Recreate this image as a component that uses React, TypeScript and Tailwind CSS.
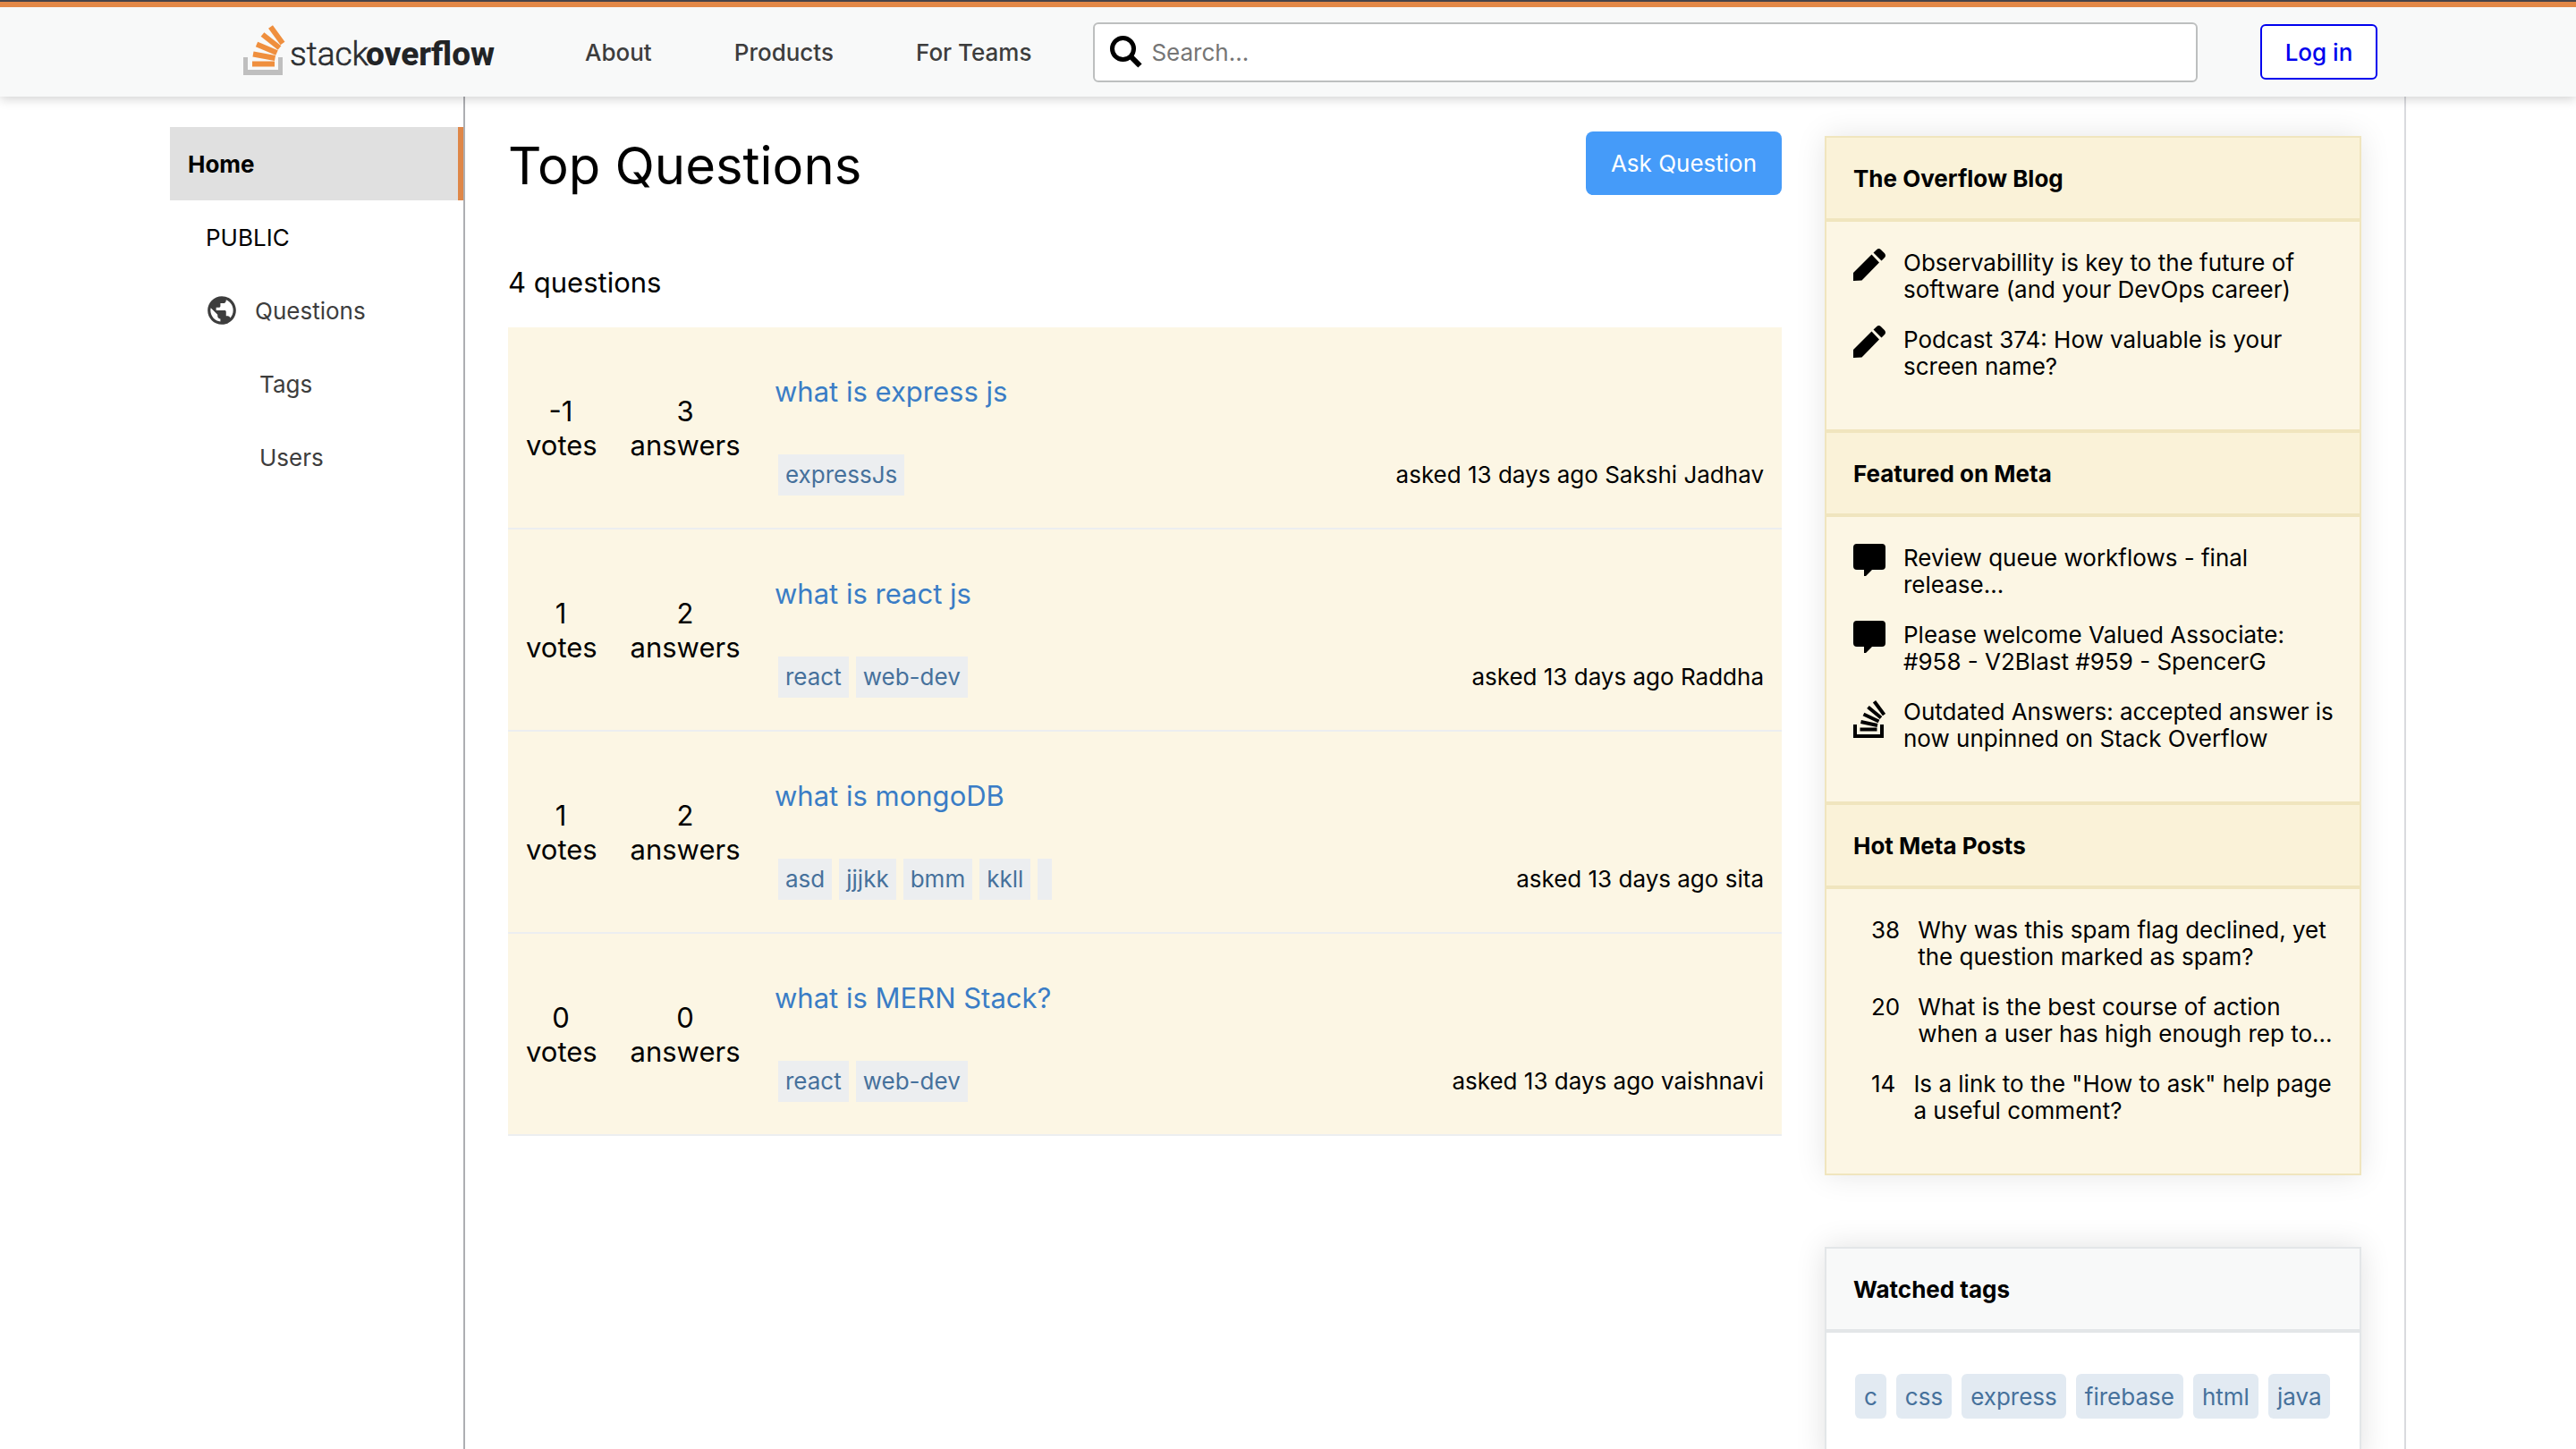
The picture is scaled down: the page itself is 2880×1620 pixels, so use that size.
import { MdPublic } from "react-icons/md";
import type { ReactNode } from "react";

const questions = [
  { votes: "-1", answers: "3", title: "what is express js", tags: ["expressJs"], author: "Sakshi Jadhav" },
  { votes: "1", answers: "2", title: "what is react js", tags: ["react", "web-dev"], author: "Raddha" },
  { votes: "1", answers: "2", title: "what is mongoDB", tags: ["asd", "jjjkk", "bmm", "kkll", ""], author: "sita" },
  { votes: "0", answers: "0", title: "what is MERN Stack?", tags: ["react", "web-dev"], author: "vaishnavi" },
];

const watched = ["c", "css", "express", "firebase", "html", "java"];

function Logo() {
  return (
    <svg viewBox="0 0 280 56" className="h-14 w-[280px] shrink-0 overflow-visible" role="img" aria-label="stack overflow">
      <path d="M0 36h5v14h34V36h5v20H0z" fill="#bfbfbf" />
      <g stroke="#ef8f3e" strokeWidth="6">
        <path d="M10 43.500H35" />
        <path d="M11 32.500L35.500 37" />
        <path d="M15 21.500L37.500 31" />
        <path d="M21.500 10.500L40.500 25.500" />
        <path d="M30.500 2L44 20.500" />
      </g>
      <text x="52" y="45" fontSize="37" fontFamily="Roboto" fontWeight="300" fill="#2b2d30" stroke="#2b2d30" strokeWidth="0.600">
        stack
      </text>
      <text x="137" y="45" fontSize="37" fontFamily="Roboto" fontWeight="800" fill="#222426">
        overflow
      </text>
    </svg>
  );
}

function PencilIcon() {
  return (
    <svg viewBox="0 0 36 36" className="size-9 shrink-0">
      <path d="M0 27L20.500 6.500 29 15.500 9.500 35.500 0 36zM22.500 4.500L26 1.200Q28.500-1 31 1.200L35 5.200Q37 8 35 10L31.500 13.500z" />
    </svg>
  );
}

function SpeechIcon() {
  return (
    <svg viewBox="0 0 36 36" className="size-9 shrink-0">
      <path d="M4 0h28q4 0 4 4v21q0 4-4 4H21l-7 7h-2v-7H4q-4 0-4-4V4q0-4 4-4z" />
    </svg>
  );
}

function StackIcon() {
  return (
    <svg viewBox="0 1 36 45" className="h-[45px] w-9 shrink-0">
      <path d="M0 31h4v11h26V31h4v15H0z" />
      <g stroke="#000" strokeWidth="4">
        <path d="M7.500 36.500H26.500" />
        <path d="M8.500 28L27 32" />
        <path d="M11.500 19.500L28.500 27.500" />
        <path d="M16.500 11.500L31 23.500" />
        <path d="M23.500 5.200L34.500 20" />
      </g>
    </svg>
  );
}

function PanelHeader({ children }: { children: ReactNode }) {
  return (
    <h2 className="flex h-[98px] items-center border-y-4 border-[#f0e5be] bg-[#faf2d8] px-[30px] pt-0.5 text-[26px] leading-[30px] font-bold first:h-[94px] first:border-t-0">
      {children}
    </h2>
  );
}

function PanelItem({ lead, children }: { lead: ReactNode; children: ReactNode }) {
  return (
    <li className="flex h-[60px] items-start gap-5">
      {lead}
      <a href="#" className="pt-px whitespace-nowrap">{children}</a>
    </li>
  );
}

const listClass = "flex flex-col gap-[26px] px-[30px] pt-[30px] pb-14 text-[26px] leading-[30px]";
const metaListClass = "flex flex-col gap-[26px] pl-[50px] pr-[30px] pt-[30px] pb-14 text-[26px] leading-[30px]";

export default function App() {
  return (
    <div className="flex h-screen flex-col overflow-hidden bg-white font-['Inter',sans-serif] text-black">
      <header className="relative z-10 border-t-2 border-[#474449] bg-[#f8f9f9] shadow-[0_2px_12px_rgba(0,0,0,0.2)]">
        <div className="border-t-[6px] border-[#e38847]">
          <div className="mx-auto flex h-[100px] max-w-[2500px] items-center pr-8 pl-[82px]">
            <a href="#" className="mr-[102px] mb-1"><Logo /></a>
            <nav className="mr-[69px] flex gap-[92px] text-[26px] font-medium text-[#3d3d3d]">
              <a href="#">About</a>
              <a href="#">Products</a>
              <a href="#" className="whitespace-nowrap">For Teams</a>
            </nav>
            <label className="mr-[70px] flex h-[67px] flex-1 items-center gap-[10px] rounded-md border-2 border-[#bdbfbf] bg-white px-[17px]">
              <svg viewBox="0 0 36 36" className="size-9 shrink-0" fill="none" stroke="#000">
                <circle cx="14.500" cy="14.500" r="12" strokeWidth="5" />
                <path d="M23 23L33.500 33.500" strokeWidth="6" />
              </svg>
              <input
                type="text"
                aria-label="Search"
                placeholder="Search..."
                className="w-full bg-transparent text-[26px] outline-none placeholder:text-[#757575]"
              />
            </label>
            <button className="h-[62px] w-[131px] rounded-md border-2 border-[#0000ee] bg-white text-[26px] font-medium text-[#0000ee]">
              Log in
            </button>
          </div>
        </div>
      </header>

      <div className="mx-auto flex w-full max-w-[2500px] flex-1 border-r-2 border-[#d9dade]">
        <nav className="w-[330px] shrink-0 border-r-2 border-[#adaeb2] pt-[34px] text-[26px]">
          <a href="#" className="flex h-[82px] items-center border-r-[6px] border-[#df8748] bg-[#e0e0e0] pl-5 font-bold">
            Home
          </a>
          <div className="flex h-[82px] items-center pl-10">PUBLIC</div>
          <a href="#" className="flex h-[82px] items-center gap-[18px] pl-[39px] text-[#3d3d3d]">
            <MdPublic size={38} />
            Questions
          </a>
          <a href="#" className="flex h-[82px] items-center pl-[100px] text-[#3d3d3d]">Tags</a>
          <a href="#" className="flex h-[82px] items-center pl-[100px] text-[#3d3d3d]">Users</a>
        </nav>

        <main className="min-w-0 flex-1 px-12 pt-[39px]">
          <div className="flex items-start justify-between">
            <h1 className="text-[58px] leading-[76px]">Top Questions</h1>
            <button className="h-[71px] w-[219px] rounded-lg bg-[#459bf9] text-[26px] text-white">Ask Question</button>
          </div>
          <p className="mt-[74px] text-[31px] leading-[38px]">4 questions</p>
          <ul className="mt-[31px]">
            {questions.map((q) => (
              <li key={q.title} className="flex h-[226px] items-center border-b-2 border-[#eceef0] bg-[#fcf6e4] px-5 pt-0.5">
                <div className="w-[78px] text-center text-[31px] leading-[38px]">
                  <p>{q.votes}</p>
                  <p>votes</p>
                </div>
                <div className="ml-10 flex w-[120px] flex-col items-center text-[31px] leading-[38px]">
                  <p>{q.answers}</p>
                  <p>answers</p>
                </div>
                <div className="ml-10 flex-1 pt-[14px]">
                  <a href="#" className="block text-[31px] leading-[38px] text-[#3a7dc6]">{q.title}</a>
                  <div className="mt-[51px] flex items-center justify-between">
                    <div className="flex gap-2 pl-1 text-[26px] leading-[30px] text-[#46719c]">
                      {q.tags.map((t) => (
                        <span key={t} className="h-[46px] bg-[#eceef0] p-2">{t}</span>
                      ))}
                    </div>
                    <p className="text-[26px] leading-[30px]">asked 13 days ago {q.author}</p>
                  </div>
                </div>
              </li>
            ))}
          </ul>
        </main>

        <aside className="w-[648px] shrink-0 pt-11 pr-12">
          <section className="border-2 border-[#f0e5be] bg-[#fcf6e4] shadow-[0_0_32px_rgba(0,0,0,0.1)]">
            <PanelHeader>The Overflow Blog</PanelHeader>
            <ul className={listClass}>
              <PanelItem lead={<PencilIcon />}>Observabillity is key to the future of<br />software (and your DevOps career)</PanelItem>
              <PanelItem lead={<PencilIcon />}>Podcast 374: How valuable is your<br />screen name?</PanelItem>
            </ul>
            <PanelHeader>Featured on Meta</PanelHeader>
            <ul className={listClass}>
              <PanelItem lead={<SpeechIcon />}>Review queue workflows - final<br />release...</PanelItem>
              <PanelItem lead={<SpeechIcon />}>Please welcome Valued Associate:<br />#958 - V2Blast #959 - SpencerG</PanelItem>
              <PanelItem lead={<StackIcon />}>Outdated Answers: accepted answer is<br />now unpinned on Stack Overflow</PanelItem>
            </ul>
            <PanelHeader>Hot Meta Posts</PanelHeader>
            <ul className={metaListClass}>
              <PanelItem lead={<span className="pt-px">38</span>}>Why was this spam flag declined, yet<br />the question marked as spam?</PanelItem>
              <PanelItem lead={<span className="pt-px">20</span>}>What is the best course of action<br />when a user has high enough rep to...</PanelItem>
              <PanelItem lead={<span className="pt-px">14</span>}>Is a link to the "How to ask" help page<br />a useful comment?</PanelItem>
            </ul>
          </section>

          <section className="mt-20 border-2 border-[#e3e6e8] bg-white shadow-[0_0_32px_rgba(0,0,0,0.12)]">
            <h2 className="flex h-[94px] items-center border-b-4 border-[#e3e6e8] bg-[#f8f9f9] px-[30px] pt-0.5 text-[26px] leading-[30px] font-bold">
              Watched tags
            </h2>
            <div className="flex gap-[11px] px-8 pt-[46px] pb-12">
              {watched.map((t) => (
                <a key={t} href="#" className="rounded-md bg-[#e2eaf2] px-[10px] pt-[11px] pb-[9px] text-[26px] leading-[30px] text-[#46719c]">
                  {t}
                </a>
              ))}
            </div>
          </section>
        </aside>
      </div>
    </div>
  );
}
